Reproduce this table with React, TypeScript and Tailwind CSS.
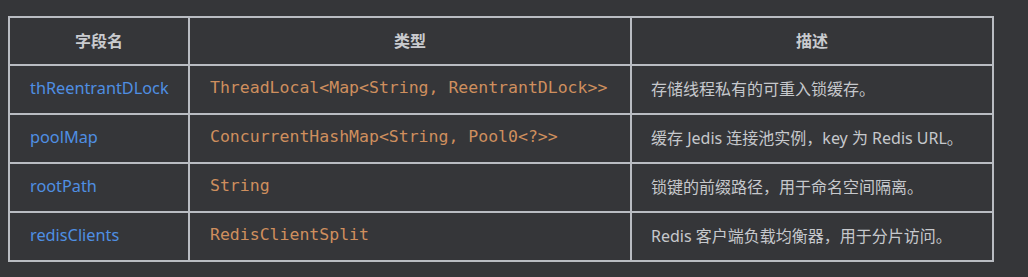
const rows = [
  {
    name: "thReentrantDLock",
    type: "ThreadLocal<Map<String, ReentrantDLock>>",
    desc: "存储线程私有的可重入锁缓存。",
  },
  {
    name: "poolMap",
    type: "ConcurrentHashMap<String, Pool0<?>>",
    desc: "缓存 Jedis 连接池实例，key 为 Redis URL。",
  },
  {
    name: "rootPath",
    type: "String",
    desc: "锁键的前缀路径，用于命名空间隔离。",
  },
  {
    name: "redisClients",
    type: "RedisClientSplit",
    desc: "Redis 客户端负载均衡器，用于分片访问。",
  },
];

const sans = "font-['Noto_Sans','Noto_Sans_CJK_SC',sans-serif]";
const mono = "font-['DejaVu_Sans_Mono','Noto_Sans_CJK_SC',monospace]";

export default function App() {
  return (
    <div className={`w-[1028px] h-[277px] bg-[#353639] pt-[16px] pl-[8px] ${sans}`}>
      <table className="border-collapse w-[984px] table-fixed">
        <colgroup>
          <col className="w-[180px]" />
          <col className="w-[442px]" />
          <col className="w-[362px]" />
        </colgroup>
        <thead>
          <tr className="h-[48px]">
            {["字段名", "类型", "描述"].map((h) => (
              <th
                key={h}
                className="border-2 border-[#b9bcc2] text-center text-[16px] font-bold text-[#c9cbcf] p-0 pb-[1px]"
              >
                {h}
              </th>
            ))}
          </tr>
        </thead>
        <tbody>
          {rows.map((r) => (
            <tr key={r.name} className="h-[49px]">
              <td className="border-2 border-[#b9bcc2] pl-[20px] pb-[2px] text-[16.3px] text-[#4f8fe3]">
                {r.name}
              </td>
              <td className={`border-2 border-[#b9bcc2] pl-[20px] pb-[2px] text-[16.5px] text-[#cf8f5e] whitespace-pre ${mono}`}>
                {r.type}
              </td>
              <td className="border-2 border-[#b9bcc2] pl-[19px] pb-[2px] text-[16px] text-[#c6c8cc]">
                {r.desc}
              </td>
            </tr>
          ))}
        </tbody>
      </table>
    </div>
  );
}
